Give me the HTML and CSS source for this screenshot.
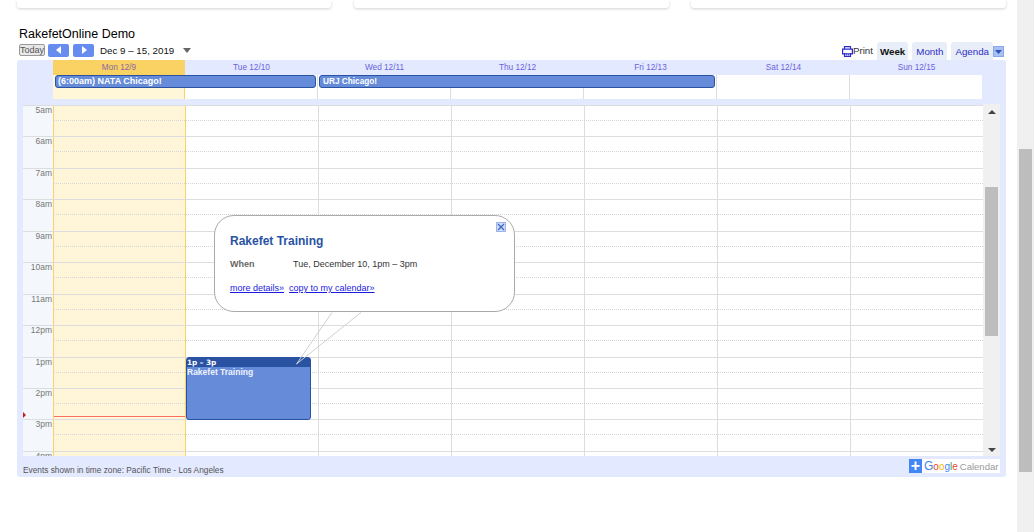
FILE: index.html
```html
<!DOCTYPE html>
<html lang="en">
<head>
<meta charset="utf-8">
<title>RakefetOnline Demo</title>
<link rel="stylesheet" href="styles.css">
</head>
<body>
<div class="page">
  <main class="main">
    <div class="cards">
      <div class="card"></div>
      <div class="card"></div>
      <div class="card"></div>
    </div>
    <h1 class="title">RakefetOnline Demo</h1>
    <div class="toolbar">
      <button class="today">Today</button>
      <div class="navs">
        <span class="nav"><svg width="6" height="8" viewBox="0 0 6 8"><path d="M5 0v8L0 4z" fill="#fff"/></svg></span>
        <span class="nav"><svg width="6" height="8" viewBox="0 0 6 8"><path d="M1 0v8l5-4z" fill="#fff"/></svg></span>
      </div>
      <span class="range">Dec 9 – 15, 2019</span>
      <svg class="range-caret" width="8" height="5" viewBox="0 0 8 5"><path d="M0 0h8L4 5z" fill="#666"/></svg>
      <div class="right-tools">
        <svg class="print-icon" width="11" height="11" viewBox="0 0 11 11" fill="none" stroke="#2b2bd0" stroke-width="1.200"><path d="M2.500 3V.6h6V3M.6 3.200h9.800v4.600H.6zM2.500 7v3.400h6V7"/><path d="M4 8.800h.8M6.200 8.800H7"/></svg>
        <span class="print">Print</span>
        <span class="tab tab-on">Week</span>
        <span class="tab">Month</span>
        <span class="tab">Agenda</span>
        <span class="menu-btn"><svg width="7" height="4" viewBox="0 0 7 4"><path d="M0 0h7L3.500 4z" fill="#2b55b8"/></svg></span>
      </div>
    </div>

    <section class="cal">
      <div class="cal-head">
        <div class="gutter"></div>
        <div class="dh dh-today">Mon 12/9</div>
        <div class="dh">Tue 12/10</div>
        <div class="dh">Wed 12/11</div>
        <div class="dh">Thu 12/12</div>
        <div class="dh">Fri 12/13</div>
        <div class="dh">Sat 12/14</div>
        <div class="dh">Sun 12/15</div>
      </div>
      <div class="allday">
        <div class="gutter"></div>
        <div class="allday-days">
          <div class="ad ad-today"></div><div class="ad"></div><div class="ad"></div><div class="ad"></div><div class="ad"></div><div class="ad"></div><div class="ad"></div>
          <div class="ad-event ad-one">(6:00am) NATA Chicago!</div>
          <div class="ad-event ad-two">URJ Chicago!</div>
        </div>
      </div>
      <div class="body">
        <div class="grid">
          <div class="cols">
            <div class="col-gutter"></div>
            <div class="col col-today"></div><div class="col"></div><div class="col"></div><div class="col"></div><div class="col"></div><div class="col"></div><div class="col"></div>
          </div>
          <div class="rows">
            <div class="hour"><span class="label">5am</span></div>
            <div class="hour"><span class="label">6am</span></div>
            <div class="hour"><span class="label">7am</span></div>
            <div class="hour"><span class="label">8am</span></div>
            <div class="hour"><span class="label">9am</span></div>
            <div class="hour"><span class="label">10am</span></div>
            <div class="hour"><span class="label">11am</span></div>
            <div class="hour"><span class="label">12pm</span></div>
            <div class="hour"><span class="label">1pm</span></div>
            <div class="hour"><span class="label">2pm</span></div>
            <div class="hour"><span class="label">3pm</span></div>
            <div class="hour"><span class="label">4pm</span></div>
          </div>
          <div class="now"></div>
          <div class="now-mark"></div>
          <div class="event">
            <div class="event-time">1p – 3p</div>
            <div class="event-name">Rakefet Training</div>
          </div>
        </div>
        <div class="vscroll">
          <svg width="8" height="4" viewBox="0 0 8 4"><path d="M0 4h8L4 0z" fill="#444"/></svg>
          <div class="vthumb"></div>
          <svg width="8" height="4" viewBox="0 0 8 4"><path d="M0 0h8L4 4z" fill="#444"/></svg>
        </div>
      </div>
      <div class="foot">
        <span class="tz">Events shown in time zone: Pacific Time - Los Angeles</span>
        <div class="gbadge">
          <span class="gplus">+</span>
          <span class="gname"><b class="g1 gbig">G</b><b class="g2">o</b><b class="g3">o</b><b class="g1">g</b><b class="g4">l</b><b class="g2">e</b><span class="gcal">Calendar</span></span>
        </div>
      </div>

      <svg class="tail" width="70" height="56" viewBox="0 0 70 56" fill="none" stroke="#cfcfcf"><path d="M36 .5 .5 52M65 .5 .5 52"/></svg>
      <div class="popup">
        <button class="close" aria-label="close"><svg width="8" height="8" viewBox="0 0 8 8"><path d="M1 1l6 6M7 1L1 7" stroke="#3f66c0" stroke-width="1.300"/></svg></button>
        <div class="pop-title">Rakefet Training</div>
        <div class="pop-when"><span class="pop-key">When</span><span>Tue, December 10, 1pm – 3pm</span></div>
        <div class="pop-links"><a href="#">more details»</a><a href="#">copy to my calendar»</a></div>
      </div>
    </section>
  </main>
  <div class="page-scroll"><div class="page-thumb"></div></div>
</div>
</body>
</html>
```
FILE: styles.css
```css
* { box-sizing: border-box; }
html, body { margin: 0; height: 532px; overflow: hidden; background: #fff; }
body { font-family: "Liberation Sans", Arial, sans-serif; color: #000; }
.page { display: flex; height: 532px; }
.main { width: 1017px; padding-left: 17px; }

.cards { display: flex; height: 8px; }
.card { height: 8px; background: #fff; border-radius: 0 0 3px 3px; box-shadow: 0 1px 3px rgba(0,0,0,.18); }
.card:nth-child(1) { width: 314px; }
.card:nth-child(2) { width: 315px; margin-left: 23px; }
.card:nth-child(3) { width: 315px; margin-left: 22px; }

.title { margin: 19px 0 0 2px; font-size: 12.500px; font-weight: 400; line-height: 14px; height: 14px; }

.toolbar { display: flex; align-items: center; height: 20px; margin-top: -1px; margin-right: 13px; padding-left: 2px; }
.today { width: 26px; height: 12px; padding: 0; font: 9px/10px "Liberation Sans", Arial, sans-serif; color: #555; background: #e8e8e8; border: 1px solid #999; border-radius: 2px; }
.navs { display: flex; gap: 4px; margin-left: 3px; }
.nav { width: 21px; height: 13px; background: #668cf0; border-radius: 2px; display: flex; align-items: center; justify-content: center; }
.range { font-size: 9.750px; margin-left: 6px; color: #111; }
.range-caret { margin-left: 9px; }
.right-tools { margin-left: auto; display: flex; align-items: flex-end; align-self: flex-end; height: 18px; }
.print-icon { margin-bottom: 3px; }
.print { font-size: 9.750px; color: #333; line-height: 13px; margin-bottom: 3px; margin-right: 4px; }
.tab { height: 18px; font-size: 9.750px; line-height: 20px; padding: 0 4px; margin-right: 4px; background: #e8eef7; color: #2d2dc8; border-radius: 3px 3px 0 0; }
.tab-on { color: #111; font-weight: 700; padding: 0 3px; }
.tab:nth-of-type(4) { margin-right: 0; }
.menu-btn { width: 11px; height: 11px; margin: 0 0 3px 0; background: #a9c0f2; border: 1px solid #88a6e8; display: flex; align-items: center; justify-content: center; }

.cal { position: relative; width: 989px; height: 417px; background: #e3e9ff; border-radius: 3px; }
.cal-head { display: grid; grid-template-columns: 36px 132px repeat(6, 133px); height: 15px; }
.dh { font-size: 8.250px; line-height: 15px; text-align: center; color: #6a62e0; }
.dh-today { background: #fad163; color: #8a6aa0; }
.allday { display: flex; height: 24px; }
.gutter { width: 36px; }
.allday-days { display: grid; grid-template-columns: 132px repeat(6, 133px); position: relative; height: 24px; width: 929px; background: #fff; overflow: hidden; }
.ad { border-right: 1px solid #ddd; }
.ad-today { background: #fff7d7; border-right: 1px solid #fad163; }
.ad-event { position: absolute; top: 0; height: 13px; background: #668cd9; border: 1px solid #2952a3; border-radius: 3px; color: #fff; font-weight: 700; line-height: 11px; padding-left: 2px; white-space: nowrap; }
.ad-one { left: 2px; width: 261px; font-size: 9px; }
.ad-two { left: 266px; width: 396px; padding-left: 3px; font-size: 8.250px; }

.body { display: flex; margin: 5px 0 0 6px; height: 352px; }
.grid { position: relative; width: 960px; height: 351px; margin-top: 1px; overflow: hidden; background: #fff; }
.cols { display: flex; height: 100%; }
.col-gutter { width: 30px; flex: none; background: #f4f8fc; }
.col { width: 133px; flex: none; border-right: 1px solid #ddd; }
.col-today { background: #fff6d9; border-left: 1px solid #fad163; border-right: 1px solid #fad163; }
.rows { position: absolute; inset: 0; }
.hour { position: relative; height: 31.450px; border-top: 1px solid #ddd; }
.hour::after { content: ""; position: absolute; left: 30px; right: 0; top: 14px; border-top: 1px dotted #d6d6d6; }
.label { display: block; width: 29px; margin-top: -1px; text-align: right; font-size: 8.500px; line-height: 10px; color: #777; }

.now { position: absolute; left: 31px; width: 131px; top: 311px; height: 1px; background: #f87060; }
.now-mark { position: absolute; left: 0; top: 307px; border: 3px solid transparent; border-left: 3px solid #c02020; border-right: 0; }
.event { position: absolute; left: 163px; top: 252px; width: 125px; height: 63px; background: #668cd9; border: 1px solid #2952a3; border-radius: 3px; color: #fff; font-size: 8.500px; font-weight: 700; }
.event-time { background: #2952a3; height: 9px; line-height: 9px; font-family: "DejaVu Sans", sans-serif; font-size: 7.300px; }
.event-name { padding: 0; line-height: 10px; color: #eef2ff; }

.vscroll { width: 17px; height: 352px; background: #f0f0f0; display: flex; flex-direction: column; align-items: center; padding: 6px 0 4px 0; justify-content: space-between; position: relative; }
.vthumb { position: absolute; left: 2px; top: 83px; width: 13px; height: 149px; background: #bdbdbd; }

.foot { display: flex; justify-content: space-between; height: 21px; padding: 3px 6px 0 6px; }
.tz { font-size: 8.300px; line-height: 22px; color: #555; }
.gbadge { display: flex; height: 14px; background: #fff; }
.gplus { width: 13px; height: 14px; background: #4285f4; color: #fff; font-size: 16px; line-height: 13px; text-align: center; font-weight: 700; }
.gname { padding-left: 2px; width: 78px; font-size: 10px; line-height: 14px; white-space: nowrap; }
.gname b { font-weight: 400; }
.gname .gbig { font-size: 12px; }
.g1 { color: #4285f4; } .g2 { color: #ea4335; } .g3 { color: #fbbc05; } .g4 { color: #34a853; }
.gcal { color: #999; font-size: 9.500px; margin-left: 2px; }

.tail { position: absolute; left: 279px; top: 252px; }
.popup { position: absolute; left: 197px; top: 155px; width: 301px; height: 97px; padding: 18px 15px 0; background: #fff; border: 1px solid #aaa; border-radius: 20px; }
.close { position: absolute; right: 8px; top: 6px; width: 10px; height: 10px; padding: 0; background: #cfdcf8; border: 1px solid #9db4ea; display: flex; align-items: center; justify-content: center; }
.pop-title { font-size: 12px; font-weight: 700; color: #2952a3; line-height: 14px; }
.pop-when { display: flex; margin-top: 10px; font-size: 9px; line-height: 12px; color: #333; }
.pop-key { width: 63px; font-weight: 700; color: #666; }
.pop-links { display: flex; gap: 5px; margin-top: 12px; font-size: 9px; line-height: 12px; }
.pop-links a { color: #1a1ae0; }

.page-scroll { width: 17px; height: 532px; background: #f0f0f0; padding: 149px 2px 0; }
.page-thumb { width: 13px; height: 323px; background: #bdbdbd; }
```
